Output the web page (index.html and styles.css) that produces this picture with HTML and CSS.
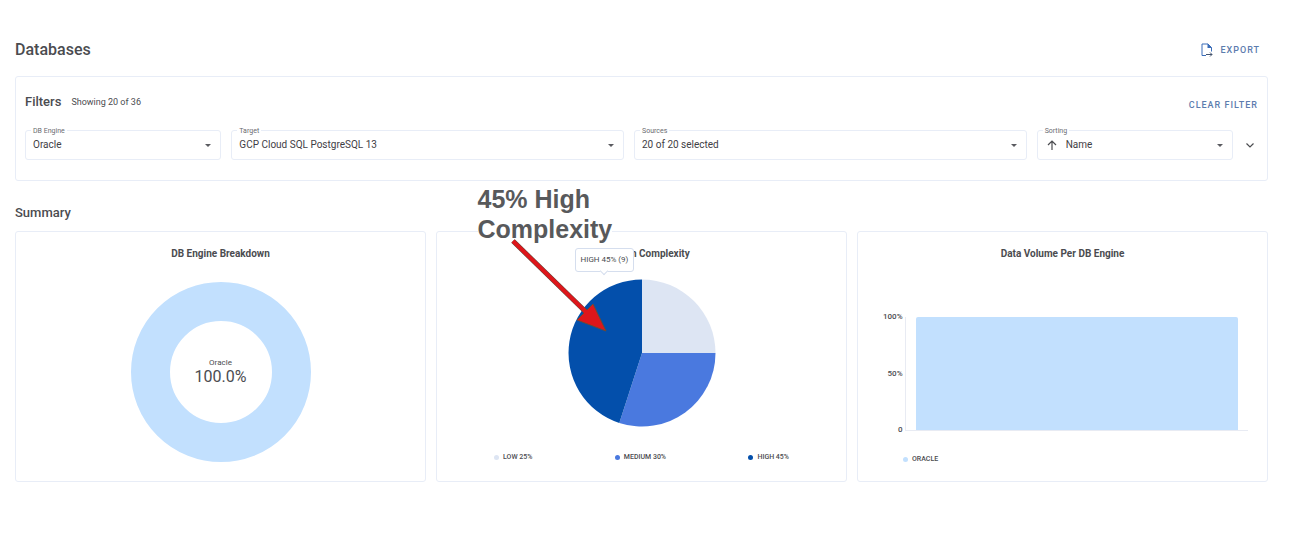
FILE: index.html
```html
<!DOCTYPE html>
<html lang="en">
<head>
<meta charset="utf-8">
<meta name="viewport" content="width=device-width, initial-scale=1">
<title>Databases</title>
<link rel="stylesheet" href="styles.css">
</head>
<body>
<main class="page">
  <header class="page-header">
    <h1 class="page-title">Databases</h1>
    <button class="text-button export" type="button">
      <svg class="export-icon" viewBox="0 0 12 14" width="12" height="14" aria-hidden="true">
        <path d="M5 12.500H1V1h6l3.500 3.500v4" fill="none" stroke="currentColor" stroke-width="1"/>
        <path d="M6.500 0.500v4.500H11z" fill="currentColor"/>
        <path d="M5 11.500h6M9 9.500l2 2-2 2" fill="none" stroke="#44546e" stroke-width="1"/>
      </svg>
      EXPORT
    </button>
  </header>

  <section class="panel filters">
    <div class="filters-header">
      <h2 class="section-title">Filters</h2>
      <span class="filters-count">Showing 20 of 36</span>
      <button class="text-button clear" type="button">CLEAR FILTER</button>
    </div>
    <div class="filters-row">
      <div class="fields">
        <div class="field">
          <label class="field-label" for="engine">DB Engine</label>
          <select class="field-select" id="engine"><option>Oracle</option></select>
          <svg class="caret" viewBox="0 0 6 3" width="6" height="3" aria-hidden="true"><path d="M0 0h6L3 3z"/></svg>
        </div>
        <div class="field">
          <label class="field-label" for="target">Target</label>
          <select class="field-select" id="target"><option>GCP Cloud SQL PostgreSQL 13</option></select>
          <svg class="caret" viewBox="0 0 6 3" width="6" height="3" aria-hidden="true"><path d="M0 0h6L3 3z"/></svg>
        </div>
        <div class="field">
          <label class="field-label" for="sources">Sources</label>
          <select class="field-select" id="sources"><option>20 of 20 selected</option></select>
          <svg class="caret" viewBox="0 0 6 3" width="6" height="3" aria-hidden="true"><path d="M0 0h6L3 3z"/></svg>
        </div>
        <div class="field">
          <label class="field-label" for="sorting">Sorting</label>
          <button class="sort-direction" type="button" aria-label="Ascending">
            <svg viewBox="0 0 10 10" width="10" height="10" aria-hidden="true"><path d="M5 10V1M1 5l4-4 4 4" fill="none" stroke="currentColor" stroke-width="1.200"/></svg>
          </button>
          <select class="field-select" id="sorting"><option>Name</option></select>
          <svg class="caret" viewBox="0 0 6 3" width="6" height="3" aria-hidden="true"><path d="M0 0h6L3 3z"/></svg>
        </div>
      </div>
      <button class="expand" type="button" aria-label="More filters">
        <svg viewBox="0 0 8 5" width="8" height="5" aria-hidden="true"><path d="M0.500 0.500l3.500 3.500 3.500-3.500" fill="none" stroke="currentColor" stroke-width="1.200"/></svg>
      </button>
    </div>
  </section>

  <h2 class="section-title summary-title">Summary</h2>
  <div class="cards">
    <section class="panel card">
      <h3 class="card-title">DB Engine Breakdown</h3>
      <div class="donut">
        <svg class="donut-ring" viewBox="0 0 180 180" width="180" height="180" aria-hidden="true">
          <circle cx="90" cy="90" r="70.500" fill="none" stroke="#c2e0fe" stroke-width="39"/>
        </svg>
        <div class="donut-text">
          <span class="donut-name">Oracle</span>
          <span class="donut-value">100.0%</span>
        </div>
      </div>
    </section>

    <section class="panel card complexity">
      <h3 class="card-title">Migration Complexity</h3>
      <svg class="pie" viewBox="-74 -74 148 148" width="148" height="148" aria-hidden="true">
        <path d="M0 0V-73.500A73.500 73.500 0 0 1 73.500 0Z" fill="#dde5f3"/>
        <path d="M0 0H73.500A73.500 73.500 0 0 1 -22.700 69.900Z" fill="#4a79df"/>
        <path d="M0 0L-22.700 69.900A73.500 73.500 0 0 1 0 -73.500Z" fill="#034fab"/>
      </svg>
      <ul class="legend">
        <li class="legend-item"><span class="dot low"></span>LOW 25%</li>
        <li class="legend-item"><span class="dot medium"></span>MEDIUM 30%</li>
        <li class="legend-item"><span class="dot high"></span>HIGH 45%</li>
      </ul>
      <div class="tooltip" role="tooltip">HIGH 45% (9)</div>
      <div class="note">
        <p class="note-text">45% High<br><span class="note-line">Complexity</span></p>
        <svg class="note-arrow" viewBox="0 0 98 95" width="98" height="95" aria-hidden="true">
          <path d="M3 3L78 76" stroke="#5c4a3c" stroke-width="5"/>
          <path d="M67 82L83 66L96 93Z" fill="#de161b" stroke="#6b4a36" stroke-width="1"/>
          <path d="M3 3L78 76" stroke="#de161b" stroke-width="4"/>
        </svg>
      </div>
    </section>

    <section class="panel card">
      <h3 class="card-title">Data Volume Per DB Engine</h3>
      <div class="chart">
        <div class="y-labels"><span>100%</span><span>50%</span><span>0</span></div>
        <div class="plot"><div class="bar"></div></div>
      </div>
      <ul class="legend volume-legend">
        <li class="legend-item"><span class="dot oracle"></span>ORACLE</li>
      </ul>
    </section>
  </div>
</main>
</body>
</html>
```
FILE: styles.css
```css
* {
  box-sizing: border-box;
}

body {
  margin: 0;
  background: #fff;
  color: #4b4c50;
  font-family: Roboto, "Liberation Sans", sans-serif;
  font-size: 10px;
}

h1, h2, h3, p, ul {
  margin: 0;
  padding: 0;
}

ul {
  list-style: none;
}

button, select {
  margin: 0;
  padding: 0;
  border: 0;
  background: none;
  color: inherit;
  font: inherit;
}

svg {
  display: block;
}

.page {
  padding: 40px 23px 40px 15px;
}

.page-header {
  display: flex;
  align-items: center;
  justify-content: space-between;
  height: 20px;
  margin-bottom: 16px;
}

.page-title {
  font-size: 16px;
  font-weight: 500;
  line-height: 20px;
}

.text-button {
  color: #5c7cae;
  font-size: 9px;
  font-weight: 500;
  letter-spacing: 1px;
  line-height: 16px;
}

.export {
  display: flex;
  align-items: center;
  gap: 7px;
  margin-right: 8px;
}

.export-icon {
  color: #3a6cb8;
}

.panel {
  border: 1px solid #e8edf7;
  border-radius: 3px;
}

.filters {
  padding: 17px 0 20px 9px;
}

.filters-header {
  display: flex;
  align-items: center;
  height: 16px;
  margin-bottom: 20px;
}

.section-title {
  font-size: 13px;
  font-weight: 500;
  line-height: 16px;
}

.filters-count {
  margin-left: 10px;
  font-size: 9px;
}

.clear {
  margin: 5px 9px 0 auto;
}

.filters-row {
  display: flex;
  align-items: center;
}

.fields {
  display: grid;
  flex: 1;
  grid-template-columns: 1fr 2fr 2fr 1fr;
  gap: 10px;
}

.field {
  position: relative;
  display: flex;
  align-items: center;
  height: 30px;
  padding: 0 9px 0 7px;
  border: 1px solid #e8edf7;
  border-radius: 3px;
}

.field-label {
  position: absolute;
  top: -4px;
  left: 5px;
  padding: 0 2px;
  background: #fff;
  color: #6a6b70;
  font-size: 7px;
  line-height: 9px;
}

.field-select {
  flex: 1;
  min-width: 0;
  appearance: none;
  color: #3f4045;
  line-height: 16px;
}

.caret {
  fill: #5a5b60;
}

.sort-direction {
  margin: 0 9px 0 2px;
}

.expand {
  display: flex;
  align-items: center;
  justify-content: center;
  width: 34px;
  height: 30px;
}

.summary-title {
  margin: 24px 0 10px;
}

.cards {
  display: grid;
  grid-template-columns: repeat(3, 1fr);
  gap: 10px;
}

.card {
  display: flex;
  flex-direction: column;
  align-items: center;
  padding: 14px 0 17px;
}

.card-title {
  font-size: 10px;
  font-weight: 700;
  line-height: 16px;
}

.donut {
  display: grid;
  place-items: center;
  margin-top: 20px;
}

.donut-ring, .donut-text {
  grid-area: 1 / 1;
}

.donut-text {
  display: flex;
  flex-direction: column;
  align-items: center;
}

.donut-name {
  font-size: 8px;
  line-height: 10px;
}

.donut-value {
  font-size: 16px;
  line-height: 18px;
}

.complexity {
  position: relative;
}

.pie {
  margin-top: 17px;
}

.legend {
  display: flex;
  justify-content: space-between;
  align-self: stretch;
  margin-top: 25px;
  padding: 0 57px;
}

.legend-item {
  display: flex;
  align-items: center;
  gap: 4px;
  font-size: 7px;
  font-weight: 500;
  line-height: 10px;
}

.dot {
  width: 5px;
  height: 5px;
  border-radius: 50%;
}

.low {
  background: #dde5f3;
}

.medium {
  background: #4a79df;
}

.high {
  background: #034fab;
}

.oracle {
  background: #c2e0fe;
}

.tooltip {
  position: absolute;
  top: 16px;
  left: calc(50% - 67px);
  padding: 0 5px;
  border: 1px solid #d5deee;
  border-radius: 3px;
  background: #fff;
  font-size: 8px;
  line-height: 22px;
  white-space: nowrap;
}

.tooltip::after {
  position: absolute;
  bottom: -3px;
  left: calc(50% - 3px);
  width: 5px;
  height: 5px;
  border: solid #d5deee;
  border-width: 0 1px 1px 0;
  background: #fff;
  content: "";
  transform: rotate(45deg);
}

.note {
  position: absolute;
  top: -48px;
  left: calc(50% - 164px);
}

.note-text {
  color: #58595b;
  font-family: "Liberation Sans", Arial, sans-serif;
  font-size: 25px;
  font-weight: 700;
  line-height: 30px;
}

.note-line {
  background: #fff;
}

.note-arrow {
  position: absolute;
  top: 54px;
  left: 32px;
}

.chart {
  display: flex;
  align-self: stretch;
  gap: 2px;
  margin-top: 50px;
  padding: 0 19px 0 25px;
}

.y-labels {
  display: flex;
  flex-direction: column;
  justify-content: space-between;
  align-items: flex-end;
  height: 123px;
  font-size: 8px;
  font-weight: 500;
  line-height: 10px;
}

.plot {
  flex: 1;
  margin: 5px 0 4px;
  padding: 0 10px;
  border: solid #e8ebf3;
  border-width: 0 0 1px 1px;
}

.bar {
  height: 100%;
  border-radius: 2px 2px 0 0;
  background: #c2e0fe;
}

.volume-legend {
  margin-top: 19px;
  padding: 0 45px;
}
```
